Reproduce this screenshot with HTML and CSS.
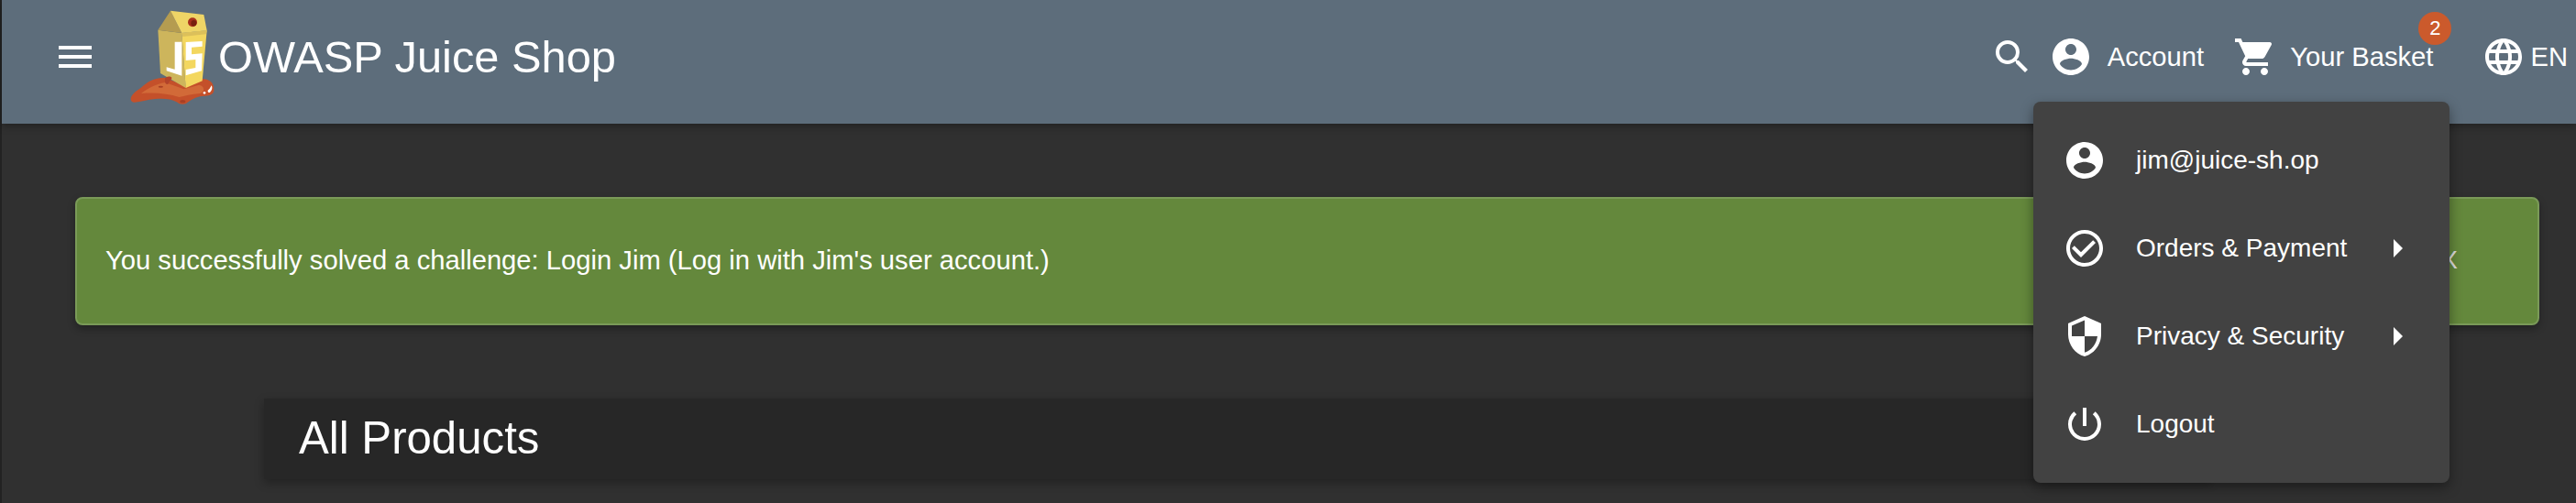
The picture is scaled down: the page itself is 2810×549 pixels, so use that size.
FILE: index.html
```html
<!DOCTYPE html>
<html lang="en">
<head>
<meta charset="utf-8">
<title>OWASP Juice Shop</title>
<link rel="stylesheet" href="styles.css">
</head>
<body>
<div class="rail"></div>
<div class="app">
  <header class="toolbar">
    <button class="menu-btn" aria-label="Menu">
      <svg class="icon" viewBox="0 0 24 24"><path d="M3 18h18v-2H3v2zm0-5h18v-2H3v2zm0-7v2h18V6H3z"/></svg>
    </button>
    <svg class="logo" viewBox="36 30 276 312">
      <path d="M38 322C42 305 62 296 80 280C96 266 118 254 150 254L212 280L272 258C294 258 310 270 310 292C311 308 298 313 280 314C258 315 240 322 226 334C216 344 200 344 188 334C172 324 148 322 118 324C92 326 70 334 50 335C42 335 37 330 38 322Z" fill="#c4502a"/>
      <path d="M72 306C92 290 118 276 150 270L212 292L262 278C280 282 282 300 264 306C236 308 214 314 196 318C160 306 116 302 72 306Z" fill="#d26a38"/>
      <path d="M127 98L205 108L218 288L135 240Z" fill="#cdb55c"/>
      <path d="M205 108L287 100L272 265L218 288Z" fill="#f3d75f"/>
      <path d="M168 35L127 98L205 108Z" fill="#b59c50"/>
      <path d="M168 35L277 48L287 100L205 108Z" fill="#efd566"/>
      <path d="M205 108L287 100L284 112L208 120Z" fill="#dcc05a"/>
      <ellipse cx="240" cy="73" rx="15" ry="15" fill="#a8301c"/>
      <ellipse cx="244" cy="76" rx="9" ry="10" fill="#78200f"/>
      <path d="M182 137H205V248L155 232V220L182 227Z" fill="#fff"/>
      <path d="M218 138L272 135V152L237 155V178L272 175L270 232L218 247V228L250 222V195L218 198Z" fill="#fff"/>
      <path d="M150 258C150 250 168 248 172 254C172 262 164 264 162 272C158 280 148 276 150 258Z" fill="#b2432a"/>
      <path d="M290 296C294 294 298 288 302 280C306 286 304 298 296 303C292 303 289 300 290 296Z" fill="#fff"/>
      <circle cx="279" cy="304" r="4" fill="#fff"/>
      <ellipse cx="136" cy="284" rx="8" ry="3" fill="#a83f24"/>
      <ellipse cx="208" cy="332" rx="9" ry="5" fill="#a83f24"/>
    </svg>
    <span class="brand">OWASP Juice Shop</span>
    <span class="spacer"></span>
    <svg class="icon search" viewBox="0 0 24 24"><path d="M15.5 14h-.79l-.28-.27A6.47 6.47 0 0 0 16 9.5 6.5 6.5 0 1 0 9.5 16c1.61 0 3.09-.59 4.23-1.57l.27.28v.79l5 4.99L20.49 19l-4.99-5zm-6 0C7.01 14 5 11.99 5 9.5S7.01 5 9.5 5 14 7.01 14 9.5 11.99 14 9.5 14z"/></svg>
    <div class="nav-btn account">
      <svg class="icon" viewBox="0 0 24 24"><path d="M12 2C6.48 2 2 6.48 2 12s4.48 10 10 10 10-4.48 10-10S17.52 2 12 2zm0 3c1.66 0 3 1.34 3 3s-1.34 3-3 3-3-1.34-3-3 1.34-3 3-3zm0 14.2c-2.5 0-4.71-1.28-6-3.22.03-1.99 4-3.08 6-3.08 1.99 0 5.97 1.09 6 3.08-1.29 1.94-3.5 3.22-6 3.22z"/></svg>
      <span>Account</span>
    </div>
    <div class="nav-btn basket">
      <svg class="icon" viewBox="0 0 24 24"><path d="M7 18c-1.1 0-1.99.9-1.99 2S5.9 22 7 22s2-.9 2-2-.9-2-2-2zM1 2v2h2l3.6 7.59-1.35 2.45c-.16.28-.25.61-.25.96 0 1.1.9 2 2 2h12v-2H7.42c-.14 0-.25-.11-.25-.25l.03-.12.9-1.63h7.45c.75 0 1.41-.41 1.75-1.03l3.58-6.49A1 1 0 0 0 20 4H5.21l-.94-2H1zm16 16c-1.1 0-1.99.9-1.99 2s.89 2 1.99 2 2-.9 2-2-.9-2-2-2z"/></svg>
      <span>Your Basket</span>
      <span class="badge">2</span>
    </div>
    <div class="nav-btn lang">
      <svg class="icon" viewBox="0 0 24 24"><path d="M11.99 2C6.47 2 2 6.48 2 12s4.47 10 9.99 10C17.52 22 22 17.52 22 12S17.52 2 11.99 2zm6.93 6h-2.95a15.65 15.65 0 0 0-1.38-3.56A8.03 8.03 0 0 1 18.92 8zM12 4.04c.83 1.2 1.48 2.53 1.91 3.96h-3.82c.43-1.43 1.08-2.76 1.91-3.96zM4.26 14C4.1 13.36 4 12.69 4 12s.1-1.36.26-2h3.38c-.08.66-.14 1.32-.14 2s.06 1.34.14 2H4.26zm.82 2h2.95c.32 1.25.78 2.45 1.38 3.56A7.987 7.987 0 0 1 5.08 16zm2.95-8H5.08a7.987 7.987 0 0 1 4.33-3.56A15.65 15.65 0 0 0 8.03 8zM12 19.96c-.83-1.2-1.48-2.53-1.91-3.96h3.82c-.43 1.43-1.08 2.76-1.91 3.96zM14.34 14H9.66c-.09-.66-.16-1.32-.16-2s.07-1.35.16-2h4.68c.09.65.16 1.32.16 2s-.07 1.34-.16 2zm.25 5.56c.6-1.11 1.06-2.31 1.38-3.56h2.95a8.03 8.03 0 0 1-4.33 3.56zM16.36 14c.08-.66.14-1.32.14-2s-.06-1.34-.14-2h3.38c.16.64.26 1.31.26 2s-.1 1.36-.26 2h-3.38z"/></svg>
      <span>EN</span>
    </div>
  </header>

  <main class="content">
    <div class="alert">
      <span>You successfully solved a challenge: Login Jim (Log in with Jim's user account.)</span>
      <span class="close">X</span>
    </div>
    <section class="products">
      <h1>All Products</h1>
    </section>
  </main>
</div>

<nav class="user-menu">
  <div class="item">
    <svg class="icon" viewBox="0 0 24 24"><path d="M12 2C6.48 2 2 6.48 2 12s4.48 10 10 10 10-4.48 10-10S17.52 2 12 2zm0 3c1.66 0 3 1.34 3 3s-1.34 3-3 3-3-1.34-3-3 1.34-3 3-3zm0 14.2c-2.5 0-4.71-1.28-6-3.22.03-1.99 4-3.08 6-3.08 1.99 0 5.97 1.09 6 3.08-1.29 1.94-3.5 3.22-6 3.22z"/></svg>
    <span>jim@juice-sh.op</span>
  </div>
  <div class="item">
    <svg class="icon" viewBox="0 0 24 24"><path d="M16.59 7.58 10 14.17l-3.59-3.58L5 12l5 5 8-8zM12 2C6.48 2 2 6.48 2 12s4.48 10 10 10 10-4.48 10-10S17.52 2 12 2zm0 18c-4.42 0-8-3.58-8-8s3.58-8 8-8 8 3.58 8 8-3.58 8-8 8z"/></svg>
    <span>Orders &amp; Payment</span>
    <i class="caret"></i>
  </div>
  <div class="item">
    <svg class="icon" viewBox="0 0 24 24"><path d="M12 1 3 5v6c0 5.55 3.84 10.74 9 12 5.16-1.26 9-6.45 9-12V5l-9-4zm0 10.99h7c-.53 4.12-3.28 7.79-7 8.94V12H5V6.3l7-3.11v8.8z"/></svg>
    <span>Privacy &amp; Security</span>
    <i class="caret"></i>
  </div>
  <div class="item">
    <svg class="icon" viewBox="0 0 24 24"><path d="M13 3h-2v10h2V3zm4.83 2.17-1.42 1.42A6.92 6.92 0 0 1 19 12c0 3.87-3.13 7-7 7A6.995 6.995 0 0 1 7.58 6.58L6.17 5.17A8.932 8.932 0 0 0 3 12a9 9 0 0 0 18 0c0-2.74-1.23-5.18-3.17-6.83z"/></svg>
    <span>Logout</span>
  </div>
</nav>
</body>
</html>
```

FILE: styles.css
```css
* { box-sizing: border-box; }
html, body { margin: 0; height: 549px; overflow: hidden; }
body {
  display: flex;
  background: #303030;
  color: #fff;
  font-family: "Liberation Sans", Arial, sans-serif;
}
.rail { width: 2px; flex: none; background: #222; }
.app { flex: 1; min-width: 0; display: flex; flex-direction: column; }
.toolbar {
  height: 135px;
  flex: none;
  display: flex;
  align-items: center;
  padding-bottom: 11px;
  padding-right: 9px;
  background: #5d6d7b;
  box-shadow: 0 3px 8px rgba(0,0,0,.3);
  position: relative;
  z-index: 1;
}
.icon { width: 48px; height: 48px; fill: #fff; display: block; flex: none; }
.menu-btn {
  width: 48px; height: 48px; padding: 0; border: 0; background: none;
  margin: 0 36px 0 56px;
}
.logo { width: 92px; height: 104px; flex: none; align-self: flex-start; margin-top: 10px; }
.brand { font-size: 48.8px; margin-left: 4px; }
.spacer { flex: 1; }
.search { margin-right: 16px; }
.nav-btn { display: flex; align-items: center; position: relative; font-size: 29.2px; }
.nav-btn span:not(.badge) { white-space: nowrap; }
.account { gap: 16px; margin-right: 32px; }
.basket { gap: 14px; margin-right: 53px; }
.lang { gap: 5px; }
.badge {
  position: absolute;
  top: -25px; right: -20px;
  width: 36px; height: 36px;
  border-radius: 50%;
  background: #cb5a2c;
  font-size: 22px;
  display: flex; align-items: center; justify-content: center;
}
.content { flex: 1; min-height: 0; padding: 80px 40px 0 80px; }
.alert {
  height: 140px;
  display: flex; align-items: center; justify-content: space-between;
  padding: 0 87px 2px 31px;
  background: #64883c;
  border: 2px solid #7a9a58;
  border-radius: 8px;
  box-shadow: 0 4px 8px rgba(0,0,0,.3);
  font-size: 29.2px;
}
.close { font-size: 28px; color: #ddd; }
.products {
  height: 88px;
  margin: 80px 358px 0 206px;
  padding: 0 0 4px 38px;
  background: #272727;
  box-shadow: 0 4px 10px rgba(0,0,0,.3);
  display: flex; align-items: center;
}
.products h1 { margin: 0; font-size: 49.2px; font-weight: 400; }
.user-menu {
  position: absolute;
  left: 2218px; top: 111px;
  width: 454px; height: 416px;
  padding: 16px 0;
  background: #424242;
  border-radius: 8px;
  box-shadow: 0 5px 14px rgba(0,0,0,.4);
  z-index: 2;
  font-size: 28px;
}
.item { height: 96px; display: flex; align-items: center; padding-left: 32px; position: relative; }
.item .icon { margin-right: 32px; }
.caret {
  position: absolute;
  left: 393px; top: 50%;
  margin-top: -10px;
  border-left: 10px solid #fff;
  border-top: 10px solid transparent;
  border-bottom: 10px solid transparent;
}
```
